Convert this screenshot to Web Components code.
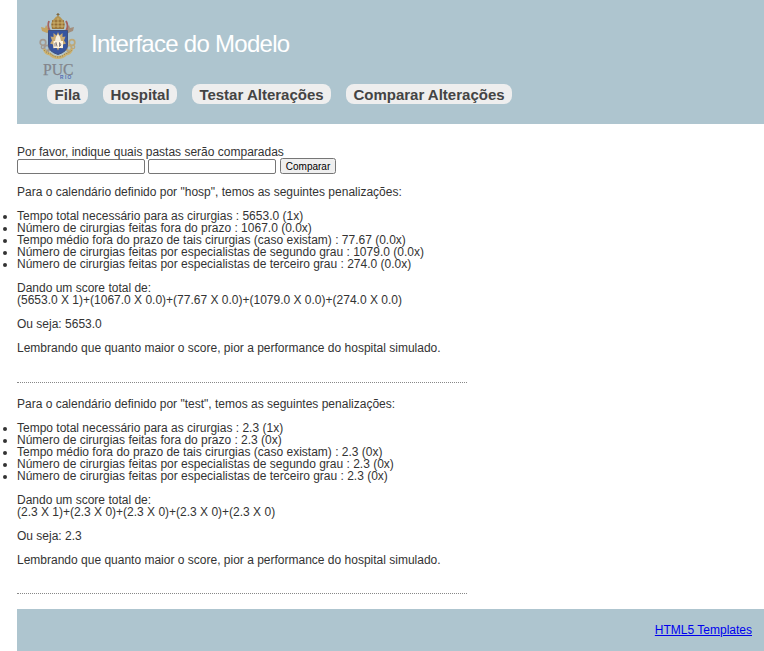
<!DOCTYPE html>
<html lang="pt-BR">
<head>
<meta charset="utf-8">
<title>Interface do Modelo</title>
<style>
html,body{margin:0;padding:0;background:#fff}
body{font:12px/12px "Liberation Sans",Arial,sans-serif;color:#333;overflow:hidden}
</style>
</head>
<body>
<model-app></model-app>
<script>
const define = (name, html) => customElements.define(name, class extends HTMLElement {
  constructor() {
    super();
    this.attachShadow({ mode: 'open' }).innerHTML = html;
  }
});

define('puc-crest', `
<style>:host{display:block;width:40px;height:70px}svg{display:block}</style>
<svg width="40" height="70" viewBox="0 0 40 70">
  <g fill="none" stroke="#a39a91" stroke-width="2.2">
    <path d="M8 18L31 40M32 18L9 40"/>
    <circle cx="5" cy="30.500" r="2.800" stroke-width="1.700"/><circle cx="9" cy="36" r="2.600" stroke-width="1.700"/>
    <circle cx="5" cy="35" r="1.700" stroke-width="1.300"/>
    <g stroke="#bda878"><circle cx="34" cy="30.500" r="2.800" stroke-width="1.700"/><circle cx="31" cy="36" r="2.600" stroke-width="1.700"/><circle cx="35" cy="35" r="1.700" stroke-width="1.300"/></g>
  </g>
  <path d="M3 15l4 1 1-3 3 5-2 3-5-2z" fill="#c4a361"/>
  <path d="M36 15l-4 1-1-3-3 5 2 3 5-2z" fill="#a28e7c"/>
  <path d="M11 9q-2 5 1 10M28 9q3 5 0 10" fill="none" stroke="#a5615c" stroke-width="1.800"/>
  <path d="M20 1v4M18.500 2.500h3" stroke="#80683e" stroke-width="1.200"/>
  <path d="M14 17q-2-7 2-10 2-3 4-3t4 3q4 3 2 10z" fill="#b59552"/>
  <path d="M14 9h12M13.500 12.500h13M14 16h12" stroke="#936d36" stroke-width="1.300"/>
  <path d="M16 8v8M20 6v10M24 8v8" stroke="#d4bb76" stroke-width=".8"/>
  <path d="M10.500 18.500h19v15q0 6-9.500 9-9.500-3-9.500-9z" fill="#3655a0" stroke="#40507d"/>
  <path d="M20 20l1.500 3.500 3-2.500v4l3-.5-1.500 4 2 3-3 1-.5 4-3-1-1.500 3-1.500-3-3 1-.5-4-3-1 2-3-1.500-4 3 .5v-4l3 2.500z" fill="#c9aa72"/>
  <path d="M20 22q-3 3-3 7h6q0-4-3-7z" fill="#f4eee0"/>
  <path d="M15.500 29h9.500v7h-9.500z" fill="#fff4df"/><path d="M17 34.500v-3l1-1 1 4M21.500 30.500v4q3-1 0-4" fill="none" stroke="#625a61" stroke-width=".8"/>
  <path d="M6 37q2 5 6 5 3 3.500 8 3.500t8-3.500q4 0 6-5" fill="none" stroke="#cdb16d" stroke-width="2.800"/>
  <path d="M6 38q3 3 7 4 3 3 7 3t7-3q4-1 7-4" fill="none" stroke="#7d7150" stroke-width="1" stroke-dasharray="1 1.500"/>
  <text x="5" y="62.500" font-family="Liberation Serif, serif" font-size="16" textLength="30.500" lengthAdjust="spacingAndGlyphs" fill="#83858c" stroke="#83858c" stroke-width=".25">PUC</text>
  <text x="22 27 29.500" y="66.700" font-family="Liberation Sans, sans-serif" font-size="4.700" fill="#4b63b0" stroke="#4b63b0" stroke-width=".15">RIO</text>
</svg>`);

define('nav-pill', `
<style>:host{display:block;box-sizing:border-box;height:20px;padding:0 8px;border-radius:8px;background:#eee;color:#444;font-weight:bold;font-size:15px;line-height:21px;white-space:nowrap;text-align:center}</style><slot></slot>`);

define('page-header', `
<style>
:host{display:block;box-sizing:border-box;height:124px;background:#aec5cf;padding:12px 0 0 21px}
.brand{display:flex;height:72px}
h1{margin:18px 0 0 13px;font-size:24px;line-height:28px;font-weight:normal;letter-spacing:-.72px;color:#fff;white-space:nowrap}
nav{display:flex;gap:15px;padding-left:9px}
nav-pill:nth-child(1){width:41px;padding:0}nav-pill:nth-child(2){width:74px;padding:0}nav-pill:nth-child(3){width:139px;padding:0}nav-pill:nth-child(4){width:166px;padding:0}
</style>
<div class="brand"><puc-crest></puc-crest><h1>Interface do Modelo</h1></div>
<nav><nav-pill>Fila</nav-pill><nav-pill>Hospital</nav-pill><nav-pill>Testar Alterações</nav-pill><nav-pill>Comparar Alterações</nav-pill></nav>`);

define('compare-form', `
<style>
:host{display:block;padding-top:22px}
form{display:flex;align-items:flex-end;height:16px;margin:0}
input{box-sizing:border-box;width:128px;height:15px;margin:0 3px 0 0;padding:0 2px;border:1px solid #767676;border-radius:2px;background:#fff;font-size:10px}
button{box-sizing:border-box;width:56px;height:16px;margin-left:1px;padding:0;border:1px solid #767676;border-radius:2.500px;background:#efefef;color:#000;font:10px/13px "Liberation Sans",Arial,sans-serif}
</style>
<div>Por favor, indique quais pastas serão comparadas</div>
<form><input aria-label="Primeira pasta"><input aria-label="Segunda pasta"><button type="button">Comparar</button></form>`);

define('score-report', `
<style>
:host{display:block;width:450px;border-bottom:1px dotted #888;white-space:nowrap}
p{margin:0 0 12px}
::slotted(ul){margin:0 0 12px!important;padding:0!important}
</style>
<p><slot name="intro"></slot></p><slot name="items"></slot>
<p>Dando um score total de:<br><slot name="formula"></slot></p>
<p>Ou seja: <slot name="total"></slot></p>
<p>Lembrando que quanto maior o score, pior a performance do hospital simulado.</p>`);

define('page-footer', `
<style>:host{display:block;box-sizing:border-box;height:42px;background:#aec5cf;padding:15px 12px 0;text-align:right}a{color:#00e}</style>
<a href="#">HTML5 Templates</a>`);

define('model-app', `
<style>
:host{display:flex;flex-direction:column;margin-left:17px;height:651px}
compare-form{margin-bottom:12px}
.first{height:196px;margin-bottom:15px}
.second{height:195px;margin-bottom:15px}
</style>
<page-header></page-header>
<compare-form></compare-form>
<score-report class="first">
  <span slot="intro">Para o calendário definido por "hosp", temos as seguintes penalizações:</span>
  <ul slot="items"><li>Tempo total necessário para as cirurgias : 5653.0 (1x)</li><li>Número de cirurgias feitas fora do prazo : 1067.0 (0.0x)</li><li>Tempo médio fora do prazo de tais cirurgias (caso existam) : 77.67 (0.0x)</li><li>Número de cirurgias feitas por especialistas de segundo grau : 1079.0 (0.0x)</li><li>Número de cirurgias feitas por especialistas de terceiro grau : 274.0 (0.0x)</li></ul>
  <span slot="formula">(5653.0 X 1)+(1067.0 X 0.0)+(77.67 X 0.0)+(1079.0 X 0.0)+(274.0 X 0.0)</span>
  <span slot="total">5653.0</span>
</score-report>
<score-report class="second">
  <span slot="intro">Para o calendário definido por "test", temos as seguintes penalizações:</span>
  <ul slot="items"><li>Tempo total necessário para as cirurgias : 2.3 (1x)</li><li>Número de cirurgias feitas fora do prazo : 2.3 (0x)</li><li>Tempo médio fora do prazo de tais cirurgias (caso existam) : 2.3 (0x)</li><li>Número de cirurgias feitas por especialistas de segundo grau : 2.3 (0x)</li><li>Número de cirurgias feitas por especialistas de terceiro grau : 2.3 (0x)</li></ul>
  <span slot="formula">(2.3 X 1)+(2.3 X 0)+(2.3 X 0)+(2.3 X 0)+(2.3 X 0)</span>
  <span slot="total">2.3</span>
</score-report>
<page-footer></page-footer>`);
</script>
</body>
</html>
